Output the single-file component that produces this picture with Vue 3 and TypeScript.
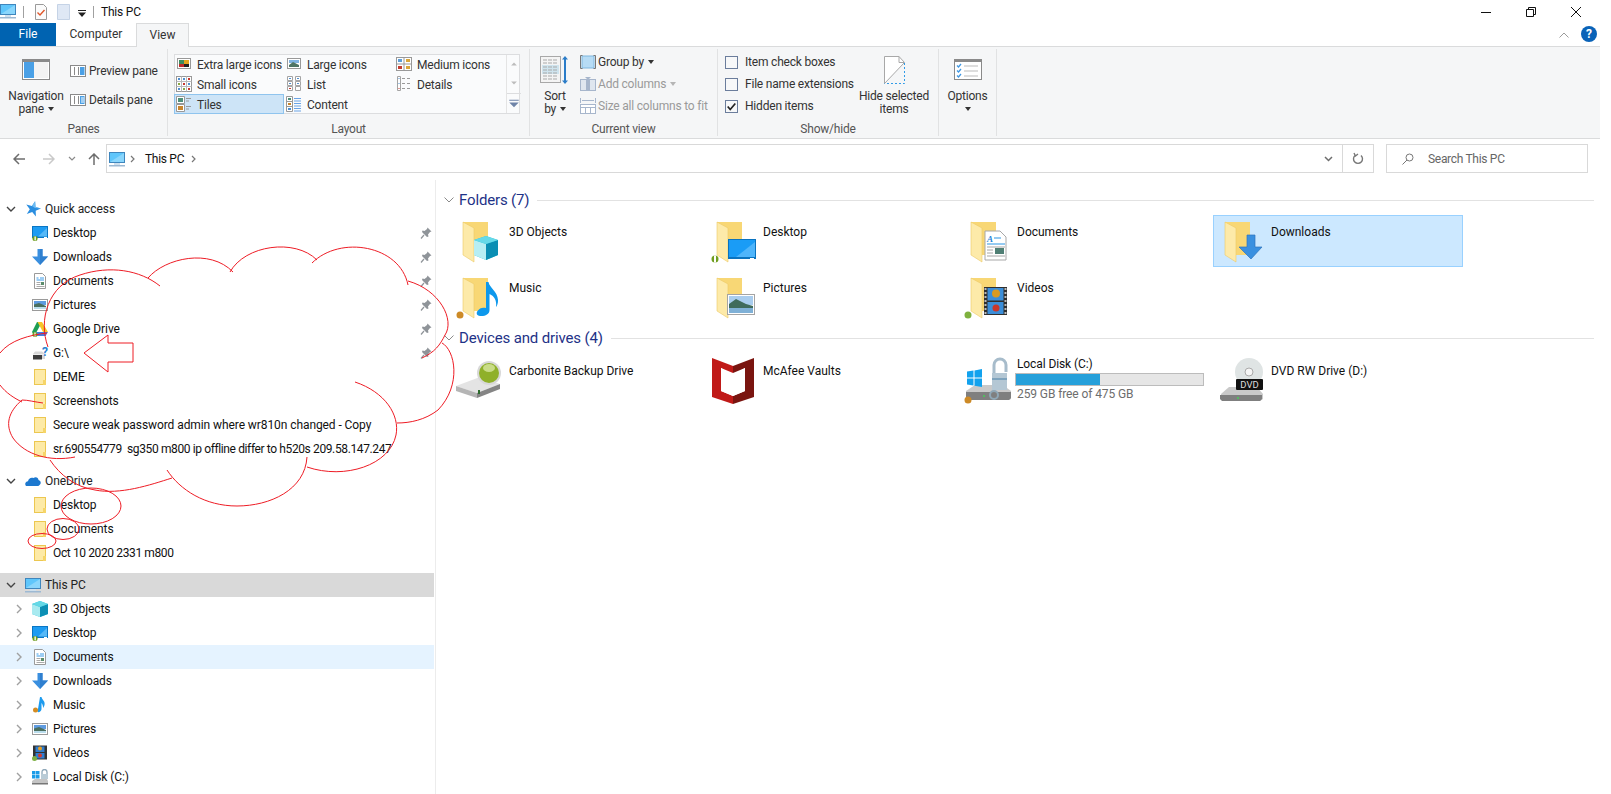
<script setup lang="ts">
interface NavRow {
  label: string
  icon: string
  pin?: boolean
  hover?: boolean
  tight?: boolean
}
interface Tile {
  label: string
  icon: string
}

const quickRows: NavRow[] = [
  { label: 'Desktop', icon: 'desktop', pin: true },
  { label: 'Downloads', icon: 'down', pin: true },
  { label: 'Documents', icon: 'doc', pin: true },
  { label: 'Pictures', icon: 'pics', pin: true },
  { label: 'Google Drive', icon: 'gdrive', pin: true },
  { label: 'G:\\', icon: 'driveq', pin: true },
  { label: 'DEME', icon: 'folder' },
  { label: 'Screenshots', icon: 'folder' },
  { label: 'Secure weak password admin where wr810n changed - Copy', icon: 'folder' },
  { label: 'sr.690554779  sg350 m800 ip offline differ to h520s 209.58.147.247', icon: 'folder', tight: true },
]
const driveRows: NavRow[] = [
  { label: 'Desktop', icon: 'folder' },
  { label: 'Documents', icon: 'folder' },
  { label: 'Oct 10 2020 2331 m800', icon: 'folder', tight: true },
]
const pcRows: NavRow[] = [
  { label: '3D Objects', icon: 'cube' },
  { label: 'Desktop', icon: 'desktop' },
  { label: 'Documents', icon: 'doc', hover: true },
  { label: 'Downloads', icon: 'down' },
  { label: 'Music', icon: 'music' },
  { label: 'Pictures', icon: 'pics' },
  { label: 'Videos', icon: 'video' },
  { label: 'Local Disk (C:)', icon: 'disk' },
]
const folders: Tile[] = [
  { label: '3D Objects', icon: 'f-cube' },
  { label: 'Desktop', icon: 'f-desktop' },
  { label: 'Documents', icon: 'f-doc' },
  { label: 'Downloads', icon: 'f-down' },
  { label: 'Music', icon: 'f-music' },
  { label: 'Pictures', icon: 'f-pics' },
  { label: 'Videos', icon: 'f-video' },
]
const layouts = [
  { label: 'Extra large icons', icon: 'l-xl' },
  { label: 'Large icons', icon: 'l-lg' },
  { label: 'Medium icons', icon: 'l-md' },
  { label: 'Small icons', icon: 'l-sm' },
  { label: 'List', icon: 'l-list' },
  { label: 'Details', icon: 'l-det' },
  { label: 'Tiles', icon: 'l-tiles', active: true },
  { label: 'Content', icon: 'l-content' },
]
const usedPercent = 45
</script>

<template>
  <div class="window">
    <svg class="sprite" aria-hidden="true">
      <symbol id="pc" viewBox="0 0 16 16">
        <rect x="0" y="1" width="16" height="11" fill="#3f86bd" />
        <rect x="1" y="2" width="14" height="9" fill="#5fc6fb" />
        <path d="M1 11 15 2v9z" fill="#8ad6fc" />
        <rect x="5" y="12" width="6" height="2" fill="#cfe0ee" />
        <rect x="0" y="14" width="16" height="1.5" fill="#9db9d3" />
      </symbol>
      <symbol id="star" viewBox="0 0 16 16">
        <path d="M10.100.3 10.500 6 16 7.600 10.700 9.700 10.900 15.500 7.200 11.100 1.800 13 4.800 8.200 1.300 3.600 6.900 5z" fill="#2a8ee0" />
        <path d="M10.100.3 10.500 6 16 7.600 10 7 7 5z" fill="#6dbcf3" />
      </symbol>
      <symbol id="desktop" viewBox="0 0 16 16">
        <rect x="0" y="1" width="16" height="12" fill="#0a76c4" />
        <rect x="1" y="2" width="14" height="9.5" fill="#1e9cf2" />
        <path d="M6 11.5 15 3v8.5z" fill="#57b9f8" />
        <rect x="12" y="12" width="3" height="1" fill="#fff" />
        <circle cx="3" cy="13.5" r="2.6" fill="#6f9e1f" />
        <rect x="2.5" y="11.5" width="1.3" height="4" fill="#fff" />
      </symbol>
      <symbol id="down" viewBox="0 0 16 16">
        <path d="M5.5 0h5v7.5H16L8 16 0 7.5h5.5z" fill="#3a8fdf" />
        <path d="M8 0h2.500v7.500H16L8 16z" fill="#2f7fcf" />
      </symbol>
      <symbol id="doc" viewBox="0 0 16 16">
        <path d="M2.500.5h8l3 3v12h-11z" fill="#fff" stroke="#9a9a9a" />
        <path d="M4.500 5h2M8 5h4M4.500 7h7.500" stroke="#3a9be8" />
        <path d="M4.500 9.500h4M4.500 11.500h4M4.500 13.500h8" stroke="#a9a9a9" />
        <rect x="9" y="9" width="3" height="3" fill="#5b8c6c" />
      </symbol>
      <symbol id="pics" viewBox="0 0 16 16">
        <rect x="0.500" y="2.500" width="15" height="11" fill="#fff" stroke="#9a9a9a" />
        <rect x="2" y="4" width="12" height="4" fill="#5f9be0" />
        <path d="M2 7.500 7 6l7 3v3H2z" fill="#4b6f5f" />
        <rect x="2" y="10" width="12" height="2" fill="#b9dcec" />
      </symbol>
      <symbol id="gdrive" viewBox="0 0 16 16">
        <path d="M5 1h5L4.800 10.500 2.300 15 0 11z" fill="#1e9e54" />
        <path d="M5.500 1H10l6 10h-5z" fill="#f7c52a" />
        <path d="M4.500 11H16l-2.500 4H2.300z" fill="#3f7ee8" />
        <circle cx="3" cy="13.500" r="2.500" fill="#6f9e1f" />
        <rect x="2.400" y="11.500" width="1.200" height="4" fill="#fff" />
      </symbol>
      <symbol id="driveq" viewBox="0 0 16 16">
        <path d="M3 6.500h7L13 9v5H1V9z" fill="#d8d8d8" />
        <rect x="1" y="10" width="9" height="4.500" fill="#3d3d3d" />
        <rect x="1" y="9" width="12" height="1" fill="#eee" />
      </symbol>
      <symbol id="folder" viewBox="0 0 16 16">
        <rect x="2.500" y="0.500" width="11" height="15" fill="#fdeaa6" stroke="#ecc750" />
        <rect x="11" y="11" width="3" height="5" fill="#f6d568" />
      </symbol>
      <symbol id="onedrive" viewBox="0 0 16 16">
        <path d="M1 13c-1.600-2-.6-4.500 2-4.800C3.500 5.500 6 4 8.500 5c2-1.800 5-.5 5 2 2 .5 3 3 1.500 4.500-.500.800-1.300 1.500-2.500 1.500H2.500C2 13 1.500 13 1 13z" fill="#1c78cf" />
      </symbol>
      <symbol id="cube" viewBox="0 0 16 16">
        <path d="M8 0 16 3v10l-8 3-8-3V3z" fill="#2fc1d6" />
        <path d="M0 3l8 3v10l-8-3z" fill="#a8eaf0" />
        <path d="M8 6l8-3v10l-8 3z" fill="#0c8fb4" />
        <path d="M8 0 16 3 8 6 0 3z" fill="#64d8e6" />
      </symbol>
      <symbol id="music" viewBox="0 0 16 16">
        <path d="M8 0h1.500c.5 3 4 4 3 8-.5 2-1.500 3-1.500 3 .2-2-.5-4-1.500-5v6c0 2.500-2.500 3.500-4 3z" fill="#1d9bee" />
        <circle cx="3.500" cy="13" r="2.500" fill="#d48c22" />
      </symbol>
      <symbol id="video" viewBox="0 0 16 16">
        <rect x="1" y="0.500" width="14" height="14" fill="#333" />
        <rect x="3.500" y="1.500" width="9" height="5.500" fill="#2f7dd0" />
        <rect x="3.500" y="8" width="9" height="5.500" fill="#2f7dd0" />
        <circle cx="8" cy="3.500" r="2" fill="#e8a022" />
        <circle cx="8" cy="10.500" r="2" fill="#d63a2f" />
        <circle cx="2.500" cy="13.500" r="2.500" fill="#7db043" />
      </symbol>
      <symbol id="disk" viewBox="0 0 16 16">
        <rect x="0" y="2" width="3.500" height="3.500" fill="#1c9ce8" />
        <rect x="4" y="2" width="3.500" height="3.500" fill="#1c9ce8" />
        <rect x="0" y="6" width="3.500" height="3.500" fill="#1c9ce8" />
        <rect x="4" y="6" width="3.500" height="3.500" fill="#1c9ce8" />
        <path d="M10 5V3a2.500 2.500 0 0 1 5 0v2" fill="none" stroke="#8ea7b8" stroke-width="1.300" />
        <rect x="9" y="5" width="7" height="5" fill="#b9cbd6" />
        <path d="M3 10h12l1 2v3H0v-3z" fill="#c4c4c4" />
        <rect x="0" y="14" width="16" height="1.500" fill="#777" />
      </symbol>
      <symbol id="pin" viewBox="0 0 12 12">
        <path d="M7.500 0.500 11.500 4.500 10 5 8 7.500 8.500 9.500 7 10 2 5 2.500 3.500 4.500 4 7 2z" fill="#8f9499" />
        <path d="M4 8 1 11.500" stroke="#8f9499" stroke-width="1.200" />
      </symbol>

      <symbol id="bigfolder" viewBox="0 0 52 52">
        <path d="M8 7h25v33H8z" fill="#f8d775" />
        <path d="M8 7 19 13v34L8 40z" fill="#fdeaa9" />
        <path d="M8 7 19 13v34L8 40z" fill="none" stroke="#ecc966" stroke-width="0.600" />
      </symbol>
      <symbol id="f-cube" viewBox="0 0 52 52">
        <use href="#bigfolder" />
        <path d="M19 25 31 21l12 4v15l-12 5-12-5z" fill="#2ac0d5" />
        <path d="M19 25l12 4v16l-12-5z" fill="#b7eef3" />
        <path d="M31 29l12-4v15l-12 5z" fill="#0a8eb3" />
        <path d="M31 21l12 4-12 4-12-4z" fill="#66d9e8" />
      </symbol>
      <symbol id="f-desktop" viewBox="0 0 52 52">
        <use href="#bigfolder" />
        <rect x="19" y="24" width="28" height="20" fill="#0a73bf" />
        <rect x="20" y="25" width="26" height="17" fill="#1a9cf6" />
        <path d="M27 42 46 27v15z" fill="#4fb5fb" />
        <rect x="41" y="43" width="4" height="1" fill="#fff" />
        <circle cx="6" cy="44" r="3.500" fill="#6f9e1f" />
        <rect x="5" y="40.500" width="2" height="7" fill="#fff" />
      </symbol>
      <symbol id="f-doc" viewBox="0 0 52 52">
        <use href="#bigfolder" />
        <path d="M22 16h15l6 6v23H22z" fill="#fff" stroke="#a8a8a8" />
        <path d="M31 23h7M24 29h18" stroke="#2a95e4" stroke-width="1.200" />
        <path d="M24 32h18M24 35h6M24 38h6M24 41h18" stroke="#a6a6a6" />
        <rect x="32" y="33" width="9" height="6" fill="#4f7f74" />
      </symbol>
      <symbol id="f-down" viewBox="0 0 52 52">
        <use href="#bigfolder" />
        <path d="M30 20h8v12h7L34 44 22 32h8z" fill="#3a90e0" stroke="#2f74bc" stroke-width="0.700" />
      </symbol>
      <symbol id="f-music" viewBox="0 0 52 52">
        <use href="#bigfolder" />
        <path d="M31 11h2.500c1 6 9 9 9.500 18 .2 3-1 6-2 7 1-6-1.500-11-6.500-13v16c0 4-4 6-8 6s-6-2-4-5 5-4 8.500-3z" fill="#0d98ec" />
        <circle cx="5" cy="44" r="3.500" fill="#cd8a26" />
      </symbol>
      <symbol id="f-pics" viewBox="0 0 52 52">
        <use href="#bigfolder" />
        <rect x="18.500" y="23.500" width="27" height="20" fill="#fff" stroke="#a4a4a4" />
        <rect x="20" y="25" width="24" height="9" fill="#a9cdee" />
        <path d="M20 33 27 28l10 5 7 2v3H20z" fill="#3f6b5c" />
        <rect x="20" y="37" width="24" height="5" fill="#7fb0d6" />
      </symbol>
      <symbol id="f-video" viewBox="0 0 52 52">
        <use href="#bigfolder" />
        <rect x="21" y="16" width="23" height="28" fill="#2f2f2f" />
        <path d="M22.500 17v26M42.500 17v26" stroke="#bbb" stroke-width="2" stroke-dasharray="2 2" />
        <rect x="24.500" y="17" width="16" height="12.500" fill="#3b8ed9" />
        <rect x="24.500" y="31" width="16" height="12" fill="#3b8ed9" />
        <circle cx="33" cy="22.500" r="4" fill="#d99a21" />
        <circle cx="33" cy="37" r="3.500" fill="#c9362b" />
        <circle cx="5" cy="44" r="3.500" fill="#7fb13f" />
      </symbol>
      <symbol id="d-carb" viewBox="0 0 52 52">
        <path d="M1 32 25 23l20 7-23 9z" fill="#e4e4e4" />
        <path d="M1 32l21 7v5L1 37z" fill="#b5b5b5" />
        <path d="M22 39l23-9v5l-23 9z" fill="#858585" />
        <circle cx="34" cy="19" r="12" fill="#d8d8d8" />
        <circle cx="34" cy="19" r="10" fill="#8fb02a" />
        <ellipse cx="34" cy="14" rx="6" ry="4" fill="#c9dc88" />
        <rect x="23" y="36" width="2" height="4" fill="#2c6b2c" />
      </symbol>
      <symbol id="d-mcafee" viewBox="0 0 52 52">
        <path d="M3 4 24 12v7L12 14v23l12 5v8L3 43z" fill="#c01a18" />
        <path d="M45 4 24 12v7l12-5v23l-12 5v8l21-7z" fill="#7a1510" />
        <path d="M12 14 24 21v21L12 37z" fill="#fff" />
        <path d="M36 14 24 21v21l12-5z" fill="#fff" />
      </symbol>
      <symbol id="d-local" viewBox="0 0 52 52">
        <path d="M3 37 12 31h28l8 6v8l-2 1H5l-2-1z" fill="#c9c9c9" />
        <path d="M3 38h45v6l-2 2H5l-2-2z" fill="#7f7f7f" />
        <circle cx="21" cy="42" r="1" fill="#45d055" />
        <path d="M4 17.500 10.500 16.500v7H4zM11.500 16.400 19 15v8.500h-7.500zM4 24.500h6.500v7L4 30.500zM11.500 24.500H19V33l-7.500-1.300z" fill="#12a2ee" />
        <path d="M31 20v-9a6 6 0 0 1 12 0v7" fill="none" stroke="#a7bccb" stroke-width="3" />
        <rect x="29" y="19" width="15" height="17" fill="#b4c7d4" />
        <rect x="29" y="24" width="15" height="2" fill="#7ea3bd" />
        <circle cx="31" cy="41" r="4" fill="none" stroke="#8fa7b6" stroke-width="2" />
        <circle cx="5" cy="46" r="3.500" fill="#cd8a26" />
      </symbol>
      <symbol id="d-dvd" viewBox="0 0 52 52">
        <path d="M4 40 12 33h28l6 7v5l-3 2H6l-2-2z" fill="#c9c9c9" />
        <path d="M3 41h42v4l-2 2H5l-2-2z" fill="#7f7f7f" />
        <circle cx="21" cy="44" r="1" fill="#45d055" />
        <circle cx="32" cy="18" r="14" fill="#dfe4e4" />
        <circle cx="32" cy="18" r="4" fill="#f5f5f5" stroke="#aaa" />
        <rect x="19" y="25" width="27" height="11" rx="1" fill="#111" />
      </symbol>

      <symbol id="l-xl" viewBox="0 0 16 16">
        <rect x="1.500" y="2.500" width="13" height="10" fill="#fff" stroke="#999" />
        <rect x="3" y="4" width="5" height="4" fill="#3d8c5f" />
        <rect x="8" y="4" width="5" height="4" fill="#e3a61e" />
        <rect x="3" y="8" width="5" height="3" fill="#c22b2b" />
        <rect x="8" y="8" width="5" height="3" fill="#222" />
      </symbol>
      <symbol id="l-lg" viewBox="0 0 16 16">
        <rect x="1.500" y="2.500" width="13" height="10" fill="#fff" stroke="#999" />
        <rect x="3" y="4" width="10" height="3" fill="#7fb3e2" />
        <path d="M3 9 7 6l6 3v2H3z" fill="#4f7565" />
      </symbol>
      <symbol id="l-md" viewBox="0 0 16 16">
        <rect x="0.500" y="1.500" width="15" height="13" fill="#fff" stroke="#999" />
        <path d="M8 1.500v13M.5 8h15" stroke="#999" />
        <rect x="2" y="3" width="4" height="3" fill="#5d9ed8" />
        <rect x="10" y="3" width="4" height="3" fill="#d9a63a" />
        <rect x="2" y="10" width="4" height="3" fill="#c43b30" />
        <rect x="10" y="10" width="4" height="3" fill="#d9a63a" />
      </symbol>
      <symbol id="l-sm" viewBox="0 0 16 16">
        <rect x="0.500" y="0.500" width="15" height="15" fill="#fff" stroke="#999" />
        <path d="M5.500 .5v15M10.500 .5v15M.5 5.500h15M.5 10.500h15" stroke="#bbb" />
        <path d="M2 2h2v2H2zM7 2h2v2H7zM12 7h2v2h-2zM2 12h2v2H2z" fill="#4e8ed0" />
        <path d="M12 2h2v2h-2zM7 7h2v2H7zM12 12h2v2h-2z" fill="#c7372d" />
        <path d="M2 7h2v2H2zM7 12h2v2H7z" fill="#8aa842" />
      </symbol>
      <symbol id="l-list" viewBox="0 0 16 16">
        <path d="M1.500 .5h5v4h-5zM1.500 5.500h5v4h-5zM1.500 10.500h5v4h-5zM9.500 .5h5v4h-5zM9.500 5.500h5v4h-5zM9.500 10.500h5v4h-5z" fill="#fff" stroke="#a4a4a4" />
        <path d="M3 2h2v1H3zM11 2h2v1h-2zM3 7h2v1H3zM11 7h2v1h-2z" fill="#4e8ed0" />
        <path d="M3 12h2v1H3z" fill="#c7372d" />
      </symbol>
      <symbol id="l-det" viewBox="0 0 16 16">
        <path d="M1.500 .5h3v14h-3z" fill="#fff" stroke="#a4a4a4" />
        <path d="M6 2.500h3M11 2.500h3M6 7.500h3M11 7.500h3M6 12.500h3M11 12.500h3" stroke="#999" />
        <path d="M2.500 2h1v1h-1zM2.500 7h1v1h-1z" fill="#4e8ed0" />
        <path d="M2.500 12h1v1h-1z" fill="#c7372d" />
      </symbol>
      <symbol id="l-tiles" viewBox="0 0 16 16">
        <path d="M.5 .5h8v7h-8zM.5 8.500h8v7h-8z" fill="#fff" stroke="#999" />
        <path d="M2 2h5v4H2z" fill="#4f8f7a" />
        <path d="M2 10h5v4H2z" fill="#c9852c" />
        <path d="M10 2.500h5M10 5h3M10 10.500h5M10 13h3" stroke="#999" />
      </symbol>
      <symbol id="l-content" viewBox="0 0 16 16">
        <path d="M.5 .5h6v15h-6z" fill="#fff" stroke="#999" />
        <path d="M.5 5.500h6M.5 10.500h6" stroke="#999" />
        <path d="M2 2h3v2H2z" fill="#4f8f7a" />
        <path d="M2 7h3v2H2z" fill="#c9852c" />
        <path d="M2 12h3v2H2z" fill="#4e8ed0" />
        <path d="M8 2.500h7M8 5h7M8 7.500h7M8 10h7M8 12.500h7M8 15h7" stroke="#6aa4e6" />
      </symbol>
    </svg>

    <!-- title bar -->
    <div class="titlebar">
      <svg class="ic16 tb-pc"><use href="#pc" /></svg>
      <span class="tb-sep"></span>
      <svg class="qa-doc" viewBox="0 0 12 16">
        <path d="M.5.5h8l3 3v12H.5z" fill="#fbfbfb" stroke="#9a9a9a" />
        <path d="M2.500 8.500 5 11l4.500-5" fill="none" stroke="#e0562a" stroke-width="1.400" />
      </svg>
      <svg class="qa-blank" viewBox="0 0 13 16">
        <path d="M.5.5h12v15H.5z" fill="#dfe8f5" stroke="#c5d3e6" />
      </svg>
      <svg class="qa-more" viewBox="0 0 8 7">
        <path d="M0 0h8v1H0zM0 2.500h8L4 7z" fill="#222" />
      </svg>
      <span class="tb-sep tb-sep2"></span>
      <span class="tb-title">This PC</span>
      <div class="win-btns">
        <svg viewBox="0 0 10 10" class="win-btn"><path d="M0 5.500h10" stroke="#111" /></svg>
        <svg viewBox="0 0 10 10" class="win-btn"><path d="M.5 2.500h7v7h-7zM2.500 2.500v-2h7v7h-2" fill="none" stroke="#111" /></svg>
        <svg viewBox="0 0 10 10" class="win-btn"><path d="M0 0l10 10M10 0 0 10" stroke="#111" /></svg>
      </div>
    </div>

    <!-- tabs -->
    <div class="tabs">
      <div class="tab tab-file">File</div>
      <div class="tab tab-comp">Computer</div>
      <div class="tab tab-view">View</div>
      <svg class="collapse" viewBox="0 0 10 6"><path d="M.5 5.500 5 1l4.500 4.500" fill="none" stroke="#9b9b9b" /></svg>
      <div class="help">?</div>
    </div>

    <!-- ribbon -->
    <div class="ribbon">
      <section class="group g-panes">
        <div class="group-body">
          <div class="big-btn nav-btn">
            <svg class="big-ic" viewBox="0 0 28 21">
              <rect x="0.500" y="0.500" width="27" height="20" fill="#fff" stroke="#8a8a8a" />
              <rect x="1" y="1" width="26" height="2" fill="#8a8a8a" />
              <rect x="2" y="3" width="10" height="16" fill="#4aa0e6" />
              <rect x="12" y="3" width="14" height="16" fill="#f3f3f3" />
            </svg>
            <span>Navigation</span>
            <span>pane <i class="caret"></i></span>
          </div>
          <div class="pane-rows">
            <div class="small-row">
              <svg class="ic16" viewBox="0 0 16 12"><rect x=".5" y=".5" width="15" height="11" fill="#fff" stroke="#8a8a8a" /><rect x="4" y="2" width="1" height="8" fill="#8a8a8a" /><rect x="8" y="2" width="1" height="8" fill="#8a8a8a" /><rect x="10" y="2" width="4.500" height="8" fill="#4aa0e6" /></svg>
              <span>Preview pane</span>
            </div>
            <div class="small-row">
              <svg class="ic16" viewBox="0 0 16 12"><rect x=".5" y=".5" width="15" height="11" fill="#fff" stroke="#8a8a8a" /><rect x="4" y="2" width="1" height="8" fill="#8a8a8a" /><rect x="8" y="2" width="1" height="8" fill="#8a8a8a" /><rect x="10" y="2" width="4.500" height="8" fill="#4aa0e6" /><path d="M11 4h3M11 6h3M11 8h3" stroke="#fff" /></svg>
              <span>Details pane</span>
            </div>
          </div>
        </div>
        <div class="group-label">Panes</div>
      </section>

      <section class="group g-layout">
        <div class="group-body">
          <div class="gallery">
            <div class="gallery-grid">
              <div v-for="item in layouts" :key="item.label" class="gallery-item" :class="{ active: item.active }">
                <svg class="ic16"><use :href="'#' + item.icon" /></svg>
                <span>{{ item.label }}</span>
              </div>
            </div>
            <div class="gallery-scroll">
              <svg viewBox="0 0 14 20"><path d="M4 11l3-3 3 3z" fill="#bcbcbc" /></svg>
              <svg viewBox="0 0 14 20"><path d="M4 8l3 3 3-3z" fill="#bcbcbc" /></svg>
              <svg viewBox="0 0 14 20" class="scroll-more"><path d="M2 6h10v1H2zM2 9h10l-5 5z" fill="#6f84a8" /></svg>
            </div>
          </div>
        </div>
        <div class="group-label">Layout</div>
      </section>

      <section class="group g-current">
        <div class="group-body">
          <div class="big-btn sort-btn">
            <svg class="sort-ic" viewBox="0 0 30 28">
              <rect x=".5" y=".5" width="20" height="26" fill="#f4f4f4" stroke="#a8a8a8" />
              <rect x="2" y="9" width="17" height="9" fill="#cfe4ee" />
              <path d="M3 4h15M3 7h15M3 11h15M3 14h15M3 17h15M3 20h15M3 23h15" stroke="#a9a9a9" stroke-dasharray="4 1" />
              <path d="M25 3v22" stroke="#2b7cc8" stroke-width="2" />
              <path d="M22 3.500 25 0l3 3.500zM22 24.500 25 28l3-3.500z" fill="#2b7cc8" />
            </svg>
            <span>Sort</span>
            <span>by <i class="caret"></i></span>
          </div>
          <div class="stack">
            <div class="small-row">
              <svg class="ic16" viewBox="0 0 16 14"><rect x="2" y="1" width="12" height="12" fill="#b7dcf5" stroke="#7fb6de" /><path d="M2.500.5H.5v13h2M13.500.5h2v13h-2" fill="none" stroke="#777" /></svg>
              <span>Group by <i class="caret"></i></span>
            </div>
            <div class="small-row disabled">
              <svg class="ic16" viewBox="0 0 16 14"><rect x=".5" y="2.500" width="15" height="11" fill="#dfe6ef" stroke="#a7b6cc" /><rect x="6" y="2" width="4" height="12" fill="#a7b6cc" /><path d="M5 0h6L8 3z" fill="#a7b6cc" /></svg>
              <span>Add columns <i class="caret light"></i></span>
            </div>
            <div class="small-row disabled">
              <svg class="ic16" viewBox="0 0 16 16"><path d="M.5 0v5M15.500 0v5M2 2.500h12" stroke="#a7b6cc" /><rect x=".5" y="6.500" width="15" height="9" fill="#fff" stroke="#a7b6cc" /><path d="M.5 9.500h15M5.500 9.500v6M10.500 9.500v6" stroke="#a7b6cc" /></svg>
              <span>Size all columns to fit</span>
            </div>
          </div>
        </div>
        <div class="group-label">Current view</div>
      </section>

      <section class="group g-show">
        <div class="group-body">
          <div class="stack checks">
            <label class="check-row"><span class="box"></span>Item check boxes</label>
            <label class="check-row"><span class="box"></span>File name extensions</label>
            <label class="check-row">
              <span class="box">
                <svg viewBox="0 0 13 13"><path d="M2 6.500 5 10l6-7" fill="none" stroke="#222" stroke-width="2" /></svg>
              </span>Hidden items
            </label>
          </div>
          <div class="big-btn hide-btn">
            <svg class="hide-ic" viewBox="0 0 21 28">
              <path d="M.5 27.500V.5H15l5.500 6" fill="#fff" />
              <path d="M.5 27.500V.5H15l5.500 6H15V.5" fill="none" stroke="#a8a8a8" />
              <path d="M.5 27.500 20 7" stroke="#a8a8a8" />
              <path d="M20.500 7v20.500H.5" fill="none" stroke="#2f9be8" stroke-dasharray="2 2" />
            </svg>
            <span>Hide selected</span>
            <span>items</span>
          </div>
        </div>
        <div class="group-label">Show/hide</div>
      </section>

      <section class="group g-options">
        <div class="group-body">
          <div class="big-btn opt-btn">
            <svg class="big-ic" viewBox="0 0 28 21">
              <rect x=".5" y=".5" width="27" height="20" fill="#fff" stroke="#8a8a8a" />
              <rect x="1" y="1" width="26" height="2" fill="#8a8a8a" />
              <path d="M3 6.500 4.500 8 7 5M3 11.500 4.500 13 7 10M3 16.500 4.500 18 7 15" fill="none" stroke="#3f97e2" stroke-width="1.300" />
              <path d="M10 7h14M10 12h14M10 17h14" stroke="#bbb" />
            </svg>
            <span>Options</span>
            <span><i class="caret"></i></span>
          </div>
        </div>
      </section>
    </div>

    <!-- address bar -->
    <div class="addr-row">
      <div class="addr-nav">
        <svg viewBox="0 0 12 12" class="nav-arrow"><path d="M12 6H1.500M6 1 1 6l5 5" fill="none" stroke="#6d6d6d" stroke-width="1.500" /></svg>
        <svg viewBox="0 0 12 12" class="nav-arrow arrow-off"><path d="M0 6h10.500M6 1l5 5-5 5" fill="none" stroke="#c9c9c9" stroke-width="1.500" /></svg>
        <svg viewBox="0 0 8 5" class="nav-more"><path d="M1 1l3 3 3-3" fill="none" stroke="#8a8a8a" stroke-width="1.200" /></svg>
        <svg viewBox="0 0 12 12" class="nav-arrow arrow-up"><path d="M6 12V1.500M1 6l5-5 5 5" fill="none" stroke="#6d6d6d" stroke-width="1.500" /></svg>
      </div>
      <div class="addr-box">
        <svg class="ic16"><use href="#pc" /></svg>
        <svg class="crumb" viewBox="0 0 5 8"><path d="M1 1l3 3-3 3" fill="none" stroke="#777" stroke-width="1.200" /></svg>
        <span class="crumb-text">This PC</span>
        <svg class="crumb" viewBox="0 0 5 8"><path d="M1 1l3 3-3 3" fill="none" stroke="#777" stroke-width="1.200" /></svg>
        <svg class="addr-drop" viewBox="0 0 9 6"><path d="M1 1l3.500 3.500L8 1" fill="none" stroke="#6d6d6d" stroke-width="1.500" /></svg>
        <div class="addr-refresh">
          <svg viewBox="0 0 12 13"><path d="M3 3.500a4.500 4.500 0 1 0 6 0M2 1l1.500 3L6 2" fill="none" stroke="#777" stroke-width="1.400" /></svg>
        </div>
      </div>
      <div class="search-box">
        <svg viewBox="0 0 12 12"><circle cx="7.500" cy="4.500" r="3.500" fill="none" stroke="#777" /><path d="M5 7 .5 11.500" stroke="#777" /></svg>
        <span>Search This PC</span>
      </div>
    </div>

    <!-- main -->
    <div class="main">
      <aside class="nav">
        <div class="nav-row root">
          <svg class="chev-down" viewBox="0 0 10 6"><path d="M1 1l4 4 4-4" fill="none" stroke="#444" stroke-width="1.400" /></svg>
          <svg class="ic16"><use href="#star" /></svg>
          <span>Quick access</span>
        </div>
        <div v-for="row in quickRows" :key="row.label" class="nav-row child">
          <svg class="ic16" viewBox="0 0 16 16">
            <use :href="'#' + row.icon" width="16" height="16" />
            <text v-if="row.icon === 'driveq'" x="10" y="11" font-size="12" font-weight="700" fill="#2b7fd0">?</text>
          </svg>
          <span :class="{ tight: row.tight }">{{ row.label }}</span>
          <svg v-if="row.pin" class="pin"><use href="#pin" /></svg>
        </div>

        <div class="nav-row root spaced">
          <svg class="chev-down" viewBox="0 0 10 6"><path d="M1 1l4 4 4-4" fill="none" stroke="#444" stroke-width="1.400" /></svg>
          <svg class="ic16"><use href="#onedrive" /></svg>
          <span>OneDrive</span>
        </div>
        <div v-for="row in driveRows" :key="row.label" class="nav-row child">
          <svg class="ic16"><use :href="'#' + row.icon" /></svg>
          <span :class="{ tight: row.tight }">{{ row.label }}</span>
        </div>

        <div class="nav-row root spaced selected">
          <svg class="chev-down" viewBox="0 0 10 6"><path d="M1 1l4 4 4-4" fill="none" stroke="#444" stroke-width="1.400" /></svg>
          <svg class="ic16"><use href="#pc" /></svg>
          <span>This PC</span>
        </div>
        <div v-for="row in pcRows" :key="row.label" class="nav-row child" :class="{ hover: row.hover }">
          <svg class="chev-right" viewBox="0 0 6 10"><path d="M1 1l4 4-4 4" fill="none" stroke="#a0a0a0" stroke-width="1.400" /></svg>
          <svg class="ic16"><use :href="'#' + row.icon" /></svg>
          <span>{{ row.label }}</span>
        </div>
      </aside>

      <div class="content">
        <div class="group-head">
          <svg viewBox="0 0 10 6"><path d="M.5.5 5 5 9.500.5" fill="none" stroke="#8a8a8a" /></svg>
          <span>Folders (7)</span>
          <i></i>
        </div>
        <div class="tiles">
          <div v-for="(f, i) in folders" :key="f.label" class="tile" :class="{ picked: i === 3 }">
            <svg class="tile-ic" viewBox="0 0 52 52">
              <use :href="'#' + f.icon" width="52" height="52" />
              <text v-if="f.icon === 'f-doc'" x="24" y="27" font-size="9" font-style="italic" font-weight="700" fill="#2285d8" font-family="Liberation Serif, serif">A</text>
            </svg>
            <span class="tile-text">{{ f.label }}</span>
          </div>
        </div>

        <div class="group-head devices">
          <svg viewBox="0 0 10 6"><path d="M.5.5 5 5 9.500.5" fill="none" stroke="#8a8a8a" /></svg>
          <span>Devices and drives (4)</span>
          <i></i>
        </div>
        <div class="tiles drive-tiles">
          <div class="tile">
            <svg class="tile-ic"><use href="#d-carb" /></svg>
            <span class="tile-text">Carbonite Backup Drive</span>
          </div>
          <div class="tile">
            <svg class="tile-ic"><use href="#d-mcafee" /></svg>
            <span class="tile-text">McAfee Vaults</span>
          </div>
          <div class="tile">
            <svg class="tile-ic"><use href="#d-local" /></svg>
            <div class="disk-info">
              <span>Local Disk (C:)</span>
              <div class="disk-bar"><div class="disk-fill" :style="{ width: usedPercent + '%' }"></div></div>
              <span class="disk-free">259 GB free of 475 GB</span>
            </div>
          </div>
          <div class="tile">
            <svg class="tile-ic" viewBox="0 0 52 52">
              <use href="#d-dvd" width="52" height="52" />
              <text x="32.500" y="34" text-anchor="middle" font-size="9.500" fill="#ddd">DVD</text>
            </svg>
            <span class="tile-text">DVD RW Drive (D:)</span>
          </div>
        </div>
      </div>
    </div>

    <!-- hand drawn red markup on top of the screenshot -->
    <svg class="markup" viewBox="0 0 1611 794">
      <g fill="none" stroke="#ee1c25" stroke-width="1">
        <path d="M48 347C38 320 48 285 80 275 110 265 140 270 160 286" />
        <path d="M148 278C165 258 210 248 233 272" />
        <path d="M230 272C245 245 295 238 317 260" />
        <path d="M312 263C340 235 400 245 408 285" />
        <path d="M408 281C440 290 455 320 445 335 440 345 435 352 422 358" />
        <path d="M442 343C455 350 462 385 438 410 425 420 410 423 397 423" />
        <path d="M355 382C385 392 400 415 396 435 390 465 345 480 307 467" />
        <path d="M307 457C305 490 270 506 237 506 205 506 180 490 167 470" />
        <path d="M172 478C150 485 120 495 95 490 75 487 60 475 50 460" />
        <path d="M75 457C50 462 25 455 13 438 5 425 8 412 22 400 28 400 35 402 43 403" />
        <path d="M47 333C30 335 10 340 0 353" />
        <path d="M0 385C6 393 14 398 22 402" />
        <polygon points="84,353 108,335 108,343 133,343 133,362 108,362 108,372" />
        <ellipse cx="91" cy="506" rx="30" ry="18" />
        <ellipse cx="63" cy="529" rx="16" ry="10.500" />
        <ellipse cx="42" cy="541" rx="14" ry="7.500" />
      </g>
    </svg>
  </div>
</template>

<style>
html, body { margin: 0; background: #fff; overflow: hidden; }
</style>

<style scoped>
.window {
  position: relative;
  width: 1611px;
  height: 794px;
  overflow: hidden;
  background: #fff;
  color: #111;
  font: 12px/16px Roboto, "Open Sans", sans-serif;
  white-space: pre;
}
.sprite { position: absolute; width: 0; height: 0; }
.ic16 { width: 16px; height: 16px; flex: none; display: block; overflow: visible; }

/* title bar */
.titlebar { height: 23px; display: flex; align-items: center; }
.tb-sep { width: 1px; height: 12px; background: #a0a0a0; margin-left: 7px; }
.tb-pc { margin-top: -2px; }
.qa-doc { width: 12px; height: 16px; margin-left: 11px; }
.qa-blank { width: 13px; height: 16px; margin-left: 10px; }
.qa-more { width: 8px; height: 7px; margin-left: 8px; margin-top: 3px; }
.tb-sep2 { margin-left: 7px; }
.tb-title { margin-left: 7px; letter-spacing: -0.2px; }
.win-btns { margin-left: auto; display: flex; gap: 35px; padding-right: 30px; }
.win-btn { width: 10px; height: 10px; display: block; }

/* tabs */
.tabs { height: 23px; display: flex; position: relative; }
.tab { height: 23px; line-height: 23px; text-align: center; box-sizing: border-box; }
.tab-file { width: 56px; background: #0063b1; color: #fff; }
.tab-comp { width: 80px; color: #333; }
.tab-view {
  width: 53px;
  height: 24px;
  background: #f5f6f7;
  border: 1px solid #dadbdc;
  border-bottom: 0;
  color: #333;
  position: relative;
  z-index: 1;
}
.collapse { width: 10px; height: 6px; margin-left: auto; margin-top: 9px; margin-right: 12px; }
.help {
  width: 16px;
  height: 16px;
  margin: 3px 14px 0 0;
  border-radius: 50%;
  background: #0a63b8;
  color: #fff;
  font-weight: 700;
  line-height: 16px;
  text-align: center;
}

/* ribbon */
.ribbon {
  width: 1600px;
  height: 93px;
  box-sizing: border-box;
  display: flex;
  background: #f5f6f7;
  border-top: 1px solid #dadbdc;
  border-bottom: 1px solid #dadbdc;
  color: #333;
  line-height: 13px;
  letter-spacing: -0.2px;
}
.group {
  box-sizing: border-box;
  height: 87px;
  margin-top: 2px;
  border-right: 1px solid #e1e2e3;
  display: flex;
  flex-direction: column;
}
.g-panes { width: 168px; }
.g-layout { width: 362px; }
.g-current { width: 188px; }
.g-show { width: 221px; }
.g-options { width: 58px; }
.group-body { flex: 1; display: flex; }
.group-label { height: 14px; padding-top: 1px; box-sizing: border-box; line-height: 13px; text-align: center; color: #555; }
.big-btn { display: flex; flex-direction: column; align-items: center; flex: none; }
.big-btn span { height: 13px; }
.big-ic { width: 28px; height: 21px; margin: 10px 0 10px; }
.nav-btn { width: 64px; margin-left: 4px; }
.pane-rows { margin: 14px 0 0 2px; display: flex; flex-direction: column; gap: 13px; }
.small-row { display: flex; align-items: center; gap: 3px; height: 16px; }
.disabled { color: #9a9a9a; }
.caret {
  display: inline-block;
  border: 3px solid transparent;
  border-top: 4px solid #333;
  border-bottom: 0;
  vertical-align: 2px;
  margin-left: 1px;
}
.caret.light { border-top-color: #b5b5b5; }

.gallery {
  margin: 5px 0 0 6px;
  width: 346px;
  height: 60px;
  box-sizing: border-box;
  border: 1px solid #dcdddf;
  display: flex;
  background: #fafbfc;
}
.gallery-grid {
  width: 330px;
  display: grid;
  grid-template-columns: 110px 110px 110px;
  grid-auto-rows: 20px;
  margin: -1px 0 0 -1px;
}
.gallery-item { display: flex; align-items: center; gap: 5px; padding-left: 2px; box-sizing: border-box; }
.gallery-item span { margin-top: 2px; }
.gallery-item.active { background: #cde4f7; outline: 1px solid #8fc4ee; outline-offset: -1px; }
.gallery-scroll {
  width: 14px;
  margin-left: 2px;
  display: flex;
  flex-direction: column;
  border-left: 1px solid #e4e4e4;
}
.gallery-scroll svg { width: 14px; height: 19px; display: block; }
.scroll-more { border-top: 1px solid #dcdddf; }

.sort-btn { width: 40px; margin-left: 5px; }
.sort-ic { width: 30px; height: 28px; margin: 7px 0 6px; }
.stack { margin: 5px 0 0 5px; display: flex; flex-direction: column; gap: 6px; }
.stack .small-row { gap: 2px; }

.checks { margin-left: 7px; width: 114px; }
.check-row { display: flex; align-items: center; height: 16px; gap: 7px; }
.box {
  width: 13px;
  height: 13px;
  box-sizing: border-box;
  border: 1px solid #6b7d9c;
  background: #f7f8f9;
  flex: none;
  display: block;
}
.box svg { display: block; width: 11px; height: 11px; }
.hide-btn { width: 96px; margin-left: 7px; }
.hide-ic { width: 21px; height: 28px; margin: 7px 0 6px; }
.opt-btn { width: 57px; }

/* address bar */
.addr-row { height: 41px; box-sizing: border-box; padding: 5px 0 0; display: flex; letter-spacing: -0.3px; }
.addr-nav { width: 106px; height: 29px; display: flex; align-items: center; }
.nav-arrow { width: 12px; height: 12px; display: block; }
.addr-nav .nav-arrow:first-child { margin-left: 13px; }
.arrow-off { margin-left: 18px; }
.nav-more { width: 8px; height: 5px; margin-left: 13px; }
.arrow-up { margin-left: 12px; }
.addr-box {
  width: 1268px;
  height: 29px;
  box-sizing: border-box;
  border: 1px solid #d9d9d9;
  display: flex;
  align-items: center;
  padding-left: 2px;
  color: #111;
}
.crumb { width: 5px; height: 8px; margin: 0 7px 0 5px; flex: none; }
.crumb-text { margin: 0 5px 0 3px; width: 36px; }
.addr-drop { width: 9px; height: 6px; margin-left: auto; margin-right: 9px; }
.addr-refresh {
  width: 30px;
  height: 27px;
  border-left: 1px solid #d9d9d9;
  display: flex;
  align-items: center;
  justify-content: center;
}
.addr-refresh svg { width: 12px; height: 13px; }
.search-box {
  margin-left: 12px;
  width: 202px;
  height: 29px;
  box-sizing: border-box;
  border: 1px solid #d9d9d9;
  display: flex;
  align-items: center;
  padding-left: 15px;
  color: #666;
}
.search-box svg { width: 12px; height: 12px; margin-right: 14px; }

/* navigation tree */
.main { display: flex; height: 614px; }
.nav { width: 436px; flex: none; box-sizing: border-box; padding-top: 17px; border-right: 1px solid #ececec; letter-spacing: -0.08px; }
.nav-row { height: 24px; width: 434px; display: flex; align-items: center; position: relative; }
.nav-row span { margin-left: 5px; }
.root { padding-left: 25px; box-sizing: border-box; color: #222; }
.root span { margin-left: 4px; }
.child { padding-left: 32px; box-sizing: border-box; }
.tight { letter-spacing: -0.38px; }
.spaced { margin-top: 8px; }
.selected { background: #d9d9d9; }
.hover { background: #e5f3ff; }
.chev-down { position: absolute; left: 6px; top: 9px; width: 10px; height: 6px; }
.chev-right { position: absolute; left: 16px; top: 7px; width: 6px; height: 10px; }
.pin { position: absolute; left: 420px; top: 6px; width: 12px; height: 12px; }

/* content pane */
.content { flex: 1; min-width: 0; padding: 12px 0 0 8px; }
.group-head {
  display: flex;
  align-items: center;
  height: 16px;
  color: #1e3287;
  font-size: 15px;
  letter-spacing: -0.15px;
}
.group-head svg { width: 10px; height: 6px; flex: none; margin-right: 5px; }
.group-head span { height: 20px; line-height: 20px; }
.group-head i { flex: 1; height: 1px; background: #e2e2e2; margin: 0 17px 0 8px; }
.devices { margin-top: 7px; }
.tiles {
  display: grid;
  grid-template-columns: repeat(4, 250px);
  grid-auto-rows: 52px;
  gap: 4px;
  margin: 7px 0 0 7px;
}
.drive-tiles { margin-top: 8px; }
.tile { display: flex; box-sizing: border-box; padding-left: 4px; }
.tile.picked { background: #cce8ff; outline: 1px solid #99d1ff; outline-offset: -1px; }
.tile-ic { width: 52px; height: 52px; flex: none; display: block; overflow: visible; }
.tile-text { margin: 9px 0 0 2px; }
.disk-info { margin: 2px 0 0 2px; display: flex; flex-direction: column; letter-spacing: -0.1px; }
.disk-bar {
  width: 189px;
  height: 13px;
  box-sizing: border-box;
  border: 1px solid #bcbcbc;
  background: #e6e6e6;
  margin: 1px 0 0 -2px;
}
.disk-fill { height: 100%; background: #26a0da; }
.disk-free { color: #6d6d6d; }

.markup { position: absolute; left: 0; top: 0; width: 1611px; height: 794px; pointer-events: none; }
</style>
